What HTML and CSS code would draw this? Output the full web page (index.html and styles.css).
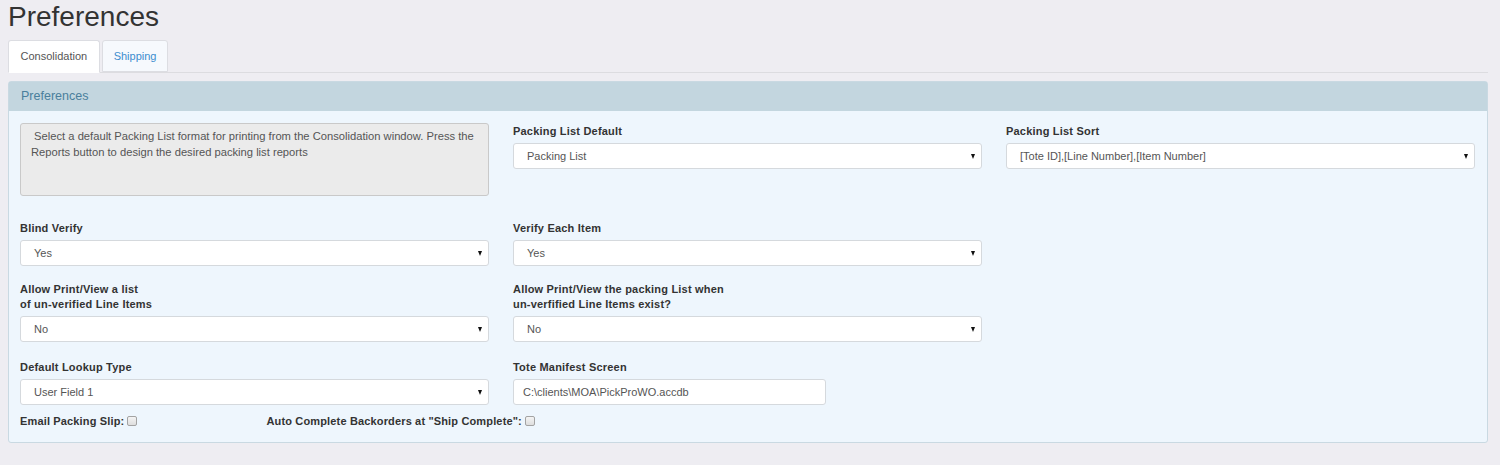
FILE: index.html
```html
<!DOCTYPE html>
<html lang="en">
<head>
<meta charset="utf-8">
<title>Preferences</title>
<link rel="stylesheet" href="styles.css">
</head>
<body>
<div class="page">
  <h1 class="title">Preferences</h1>
  <div class="tabs">
    <div class="tab tab-active">Consolidation</div>
    <div class="tab tab-link">Shipping</div>
  </div>
  <div class="panel">
    <div class="panel-heading">Preferences</div>
    <div class="panel-body">
      <div class="row row-first">
        <div class="cell">
          <div class="info">&nbsp;Select a default Packing List format for printing from the Consolidation window. Press the Reports button to design the desired packing list reports</div>
        </div>
        <div class="cell">
          <div class="label">Packing List Default</div>
          <div class="select"><span class="select-text">Packing List</span><span class="caret"></span></div>
        </div>
        <div class="cell">
          <div class="label">Packing List Sort</div>
          <div class="select"><span class="select-text">[Tote ID],[Line Number],[Item Number]</span><span class="caret"></span></div>
        </div>
      </div>
      <div class="row">
        <div class="cell">
          <div class="label">Blind Verify</div>
          <div class="select"><span class="select-text">Yes</span><span class="caret"></span></div>
        </div>
        <div class="cell">
          <div class="label">Verify Each Item</div>
          <div class="select"><span class="select-text">Yes</span><span class="caret"></span></div>
        </div>
        <div class="cell"></div>
      </div>
      <div class="row">
        <div class="cell">
          <div class="label label-2">Allow Print/View a list<br>of un-verified Line Items</div>
          <div class="select"><span class="select-text">No</span><span class="caret"></span></div>
        </div>
        <div class="cell">
          <div class="label label-2">Allow Print/View the packing List when<br>un-verfified Line Items exist?</div>
          <div class="select"><span class="select-text">No</span><span class="caret"></span></div>
        </div>
        <div class="cell"></div>
      </div>
      <div class="row row-fourth">
        <div class="cell">
          <div class="label">Default Lookup Type</div>
          <div class="select"><span class="select-text">User Field 1</span><span class="caret"></span></div>
        </div>
        <div class="cell">
          <div class="label">Tote Manifest Screen</div>
          <div class="input">C:\clients\MOA\PickProWO.accdb</div>
        </div>
        <div class="cell"></div>
      </div>
      <div class="row row-checks">
        <div class="checks">
          <div class="check">Email Packing Slip:<span class="box"></span></div>
          <div class="check">Auto Complete Backorders at "Ship Complete":<span class="box"></span></div>
        </div>
      </div>
    </div>
  </div>
</div>
</body>
</html>
```

FILE: styles.css
```css
* { box-sizing: border-box; }

html, body {
  margin: 0;
  padding: 0;
  background: #eeedf2;
  font-family: "Liberation Sans", Arial, Helvetica, sans-serif;
  color: #333;
}

.page {
  padding: 0 12px 0 8px;
}

.title {
  margin: 0;
  font-size: 28px;
  line-height: 34px;
  font-weight: normal;
  color: #333;
}

.tabs {
  margin-top: 6px;
  display: flex;
  gap: 2px;
  height: 33px;
  border-bottom: 1px solid #dcdce0;
}

.tab {
  height: 33px;
  padding: 0 11.5px;
  font-size: 11px;
  line-height: 31px;
  border: 1px solid #dcdde2;
  border-radius: 3px 3px 0 0;
}

.tab-active {
  background: #fff;
  color: #555;
  border-bottom-color: #fff;
}

.tab-link {
  background: #f6f9fd;
  color: #3c8dcf;
  height: 32px;
  padding: 0 11px;
}

.panel {
  margin-top: 8px;
  border: 1px solid #c9d9e2;
  border-radius: 3px;
  background: #eef6fd;
}

.panel-heading {
  height: 29px;
  background: #c3d6df;
  color: #4a7f9c;
  font-size: 12.5px;
  line-height: 29px;
  padding-left: 12px;
  border-bottom: 1px solid #c3d6df;
}

.panel-body {
  padding: 12px 12px 13px 11px;
  display: flex;
  flex-direction: column;
  gap: 16px;
}

.row {
  display: grid;
  grid-template-columns: repeat(3, minmax(0, 1fr));
  column-gap: 24px;
}

.row-first {
  margin-bottom: 8px;
}

.row-fourth {
  margin-top: 1px;
}

.row-checks {
  margin-top: -8px;
}

.cell {
  display: flex;
  flex-direction: column;
  justify-content: flex-end;
}

.row-first .cell {
  justify-content: flex-start;
}

.info {
  height: 73px;
  background: #ebebeb;
  border: 1px solid #c9c9c9;
  border-radius: 3px;
  padding: 4px 10px;
  font-size: 11.2px;
  line-height: 16px;
  color: #555;
}

.label {
  font-size: 11px;
  font-weight: bold;
  letter-spacing: 0.2px;
  line-height: 16px;
  margin-bottom: 4px;
  color: #333;
}

.label-2 {
  line-height: 15px;
}

.select {
  height: 26px;
  background: #fff;
  border: 1px solid #d5d9dd;
  border-radius: 3px;
  display: flex;
  align-items: center;
  justify-content: space-between;
  padding: 0 6px 0 13px;
  font-size: 11px;
  color: #555;
}

.caret {
  width: 0;
  height: 0;
  border-left: 2.5px solid transparent;
  border-right: 2.5px solid transparent;
  border-top: 5px solid #111;
  margin-top: 1px;
}

.input {
  width: 66.67%;
  height: 26px;
  background: #fff;
  border: 1px solid #d5d9dd;
  border-radius: 3px;
  padding: 0 9px;
  font-size: 11px;
  line-height: 24px;
  color: #555;
}

.checks {
  grid-column: 1 / 2;
  display: grid;
  grid-template-columns: repeat(2, minmax(0, 1fr));
  column-gap: 24px;
}

.check {
  font-size: 11px;
  font-weight: bold;
  letter-spacing: 0.15px;
  line-height: 16px;
  white-space: nowrap;
  color: #333;
}

.box {
  display: inline-block;
  width: 10px;
  height: 10px;
  margin-left: 3px;
  vertical-align: -1px;
  border: 1px solid #a3a3a3;
  border-radius: 2px;
  background: linear-gradient(#f4f4f4, #dedede);
}
```
